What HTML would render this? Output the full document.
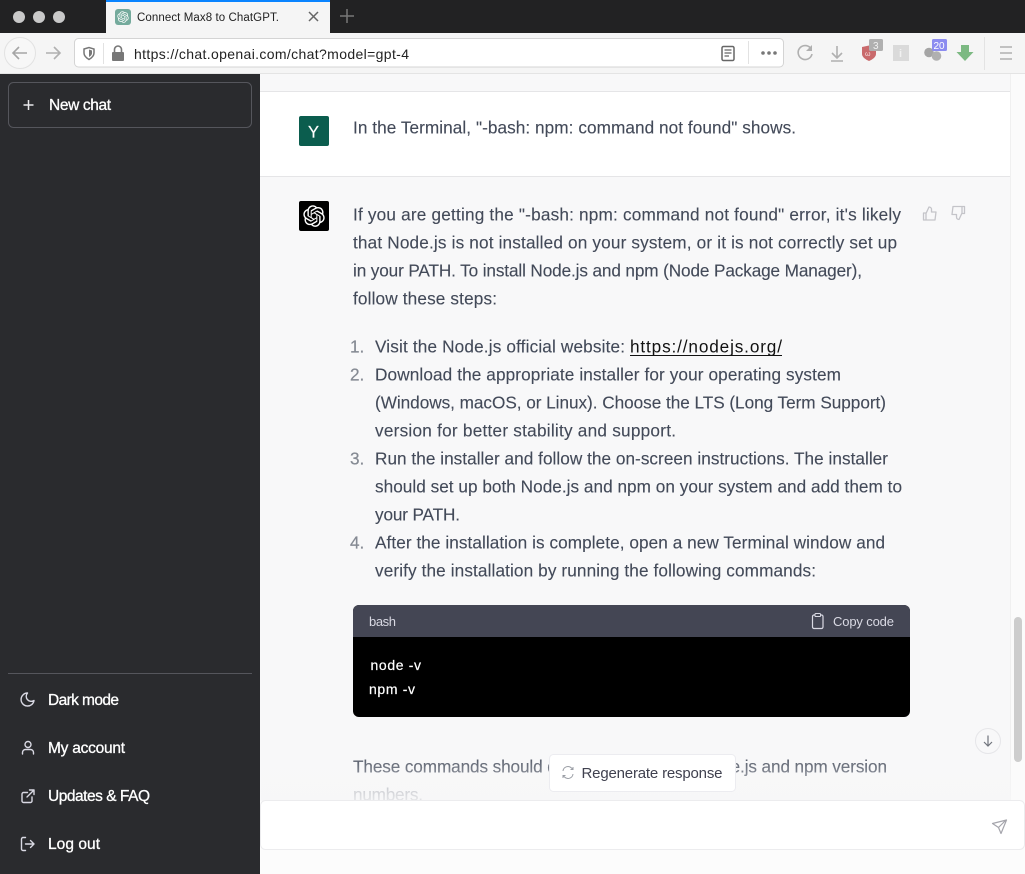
<!DOCTYPE html>
<html lang="en"><head><meta charset="utf-8"><title>Connect Max8 to ChatGPT.</title>
<style>
html,body{margin:0;padding:0;background:#f7f7f8;width:1025px;height:874px;overflow:hidden}
svg{display:block;position:absolute;left:0;top:0}
text{font-family:"Liberation Sans",sans-serif}
.t{font-size:17.2px;fill:#434a59;stroke:#434a59;stroke-width:.12px}
.s{font-size:15.500px;fill:#fff;stroke:#fff;stroke-width:.3px}
.n{font-size:17.200px;fill:#858a93;stroke:#858a93;stroke-width:.2px}
.i{fill:none;stroke:#d9d9e3;stroke-width:1.4;stroke-linecap:round;stroke-linejoin:round}
</style></head><body>
<svg width="1025" height="874" viewBox="0 0 1025 874" xmlns="http://www.w3.org/2000/svg">
<defs>
<path id="logo" d="M37.5324 16.8707C37.9808 15.5241 38.1363 14.0974 37.9886 12.6859C37.8409 11.2744 37.3934 9.91076 36.676 8.68622C35.6126 6.83404 33.9882 5.3676 32.0373 4.4985C30.0864 3.62941 27.9098 3.40259 25.8215 3.85078C24.8796 2.7893 23.7219 1.94125 22.4257 1.36341C21.1295 0.785575 19.7249 0.491269 18.3058 0.500197C16.1708 0.495044 14.0893 1.16803 12.3614 2.42214C10.6335 3.67624 9.34853 5.44666 8.6917 7.47815C7.30085 7.76286 5.98686 8.3414 4.8377 9.17505C3.68854 10.0087 2.73073 11.0782 2.02839 12.312C0.956464 14.1591 0.498905 16.2988 0.721698 18.4228C0.944492 20.5467 1.83612 22.5449 3.268 24.1293C2.81966 25.4759 2.66413 26.9026 2.81182 28.3141C2.95951 29.7256 3.40701 31.0892 4.12437 32.3138C5.18791 34.1659 6.8123 35.6322 8.76321 36.5013C10.7141 37.3704 12.8907 37.5973 14.9789 37.1492C15.9208 38.2107 17.0786 39.0587 18.3747 39.6366C19.6709 40.2144 21.0755 40.5087 22.4946 40.4998C24.6307 40.5054 26.7133 39.8321 28.4418 38.5772C30.1704 37.3223 31.4556 35.5506 32.1119 33.5179C33.5027 33.2332 34.8167 32.6547 35.9659 31.821C37.115 30.9874 38.0728 29.9178 38.7752 28.684C39.8458 26.8371 40.3023 24.6979 40.0789 22.5748C39.8556 20.4517 38.9639 18.4544 37.5324 16.8707ZM22.4978 37.8849C20.7443 37.8874 19.0459 37.2733 17.6994 36.1501C17.7601 36.117 17.8666 36.0586 17.936 36.0161L25.9004 31.4156C26.1003 31.3019 26.2663 31.137 26.3813 30.9378C26.4964 30.7386 26.5563 30.5124 26.5549 30.2825V19.0542L29.9213 20.998C29.9389 21.0068 29.9541 21.0198 29.9656 21.0359C29.977 21.052 29.9842 21.0707 29.9867 21.0902V30.3889C29.9842 32.375 29.1946 34.2791 27.7909 35.6841C26.3872 37.0892 24.4838 37.8806 22.4978 37.8849ZM6.39227 31.0064C5.51397 29.4888 5.19742 27.7107 5.49804 25.9832C5.55718 26.0187 5.66048 26.0818 5.73461 26.1244L13.699 30.7248C13.8975 30.8408 14.1233 30.902 14.3532 30.902C14.583 30.902 14.8088 30.8408 15.0073 30.7248L24.731 25.1103V28.9979C24.7321 29.0177 24.7283 29.0376 24.7199 29.0556C24.7115 29.0736 24.6988 29.0893 24.6829 29.1012L16.6317 33.7497C14.9096 34.7416 12.8643 35.0097 10.9447 34.4954C9.02506 33.9811 7.38785 32.7263 6.39227 31.0064ZM4.29707 13.6194C5.17156 12.0998 6.55279 10.9364 8.19885 10.3327C8.19885 10.4013 8.19491 10.5228 8.19491 10.6071V19.808C8.19351 20.0378 8.25334 20.2638 8.36823 20.4629C8.48312 20.6619 8.64893 20.8267 8.84863 20.9404L18.5723 26.5542L15.206 28.4979C15.1894 28.5089 15.1703 28.5155 15.1505 28.5173C15.1307 28.5191 15.1107 28.516 15.0924 28.5082L7.04046 23.8557C5.32135 22.8601 4.06716 21.2235 3.55289 19.3046C3.03862 17.3858 3.30624 15.3413 4.29707 13.6194ZM31.955 20.0556L22.2312 14.4411L25.5976 12.4981C25.6142 12.4872 25.6333 12.4805 25.6531 12.4787C25.6729 12.4769 25.6928 12.4801 25.7111 12.4879L33.7631 17.1364C34.9967 17.849 36.0017 18.8982 36.6606 20.1613C37.3194 21.4244 37.6047 22.849 37.4832 24.2684C37.3617 25.6878 36.8382 27.0432 35.9743 28.1759C35.1103 29.3086 33.9415 30.1717 32.6047 30.6641C32.6047 30.5947 32.6047 30.4733 32.6047 30.3889V21.188C32.6066 20.9586 32.5474 20.7328 32.4332 20.5338C32.319 20.3348 32.154 20.1698 31.955 20.0556ZM35.3055 15.0128C35.2464 14.9765 35.1431 14.9142 35.069 14.8717L27.1045 10.2712C26.906 10.1554 26.6803 10.0943 26.4504 10.0943C26.2206 10.0943 25.9948 10.1554 25.7963 10.2712L16.0726 15.8858V11.9982C16.0715 11.9783 16.0753 11.9585 16.0837 11.9405C16.0921 11.9225 16.1048 11.9068 16.1207 11.8949L24.1719 7.25025C25.4053 6.53903 26.8158 6.19376 28.2383 6.25482C29.6608 6.31589 31.0364 6.78077 32.2044 7.59508C33.3723 8.40939 34.2842 9.53945 34.8334 10.8531C35.3826 12.1667 35.5464 13.6095 35.3055 15.0128ZM14.2424 21.9419L10.8752 19.9981C10.8576 19.9893 10.8423 19.9763 10.8309 19.9602C10.8195 19.9441 10.8122 19.9254 10.8098 19.9058V10.6071C10.8107 9.18295 11.2173 7.78848 11.9819 6.58696C12.7466 5.38544 13.8377 4.42659 15.1275 3.82264C16.4173 3.21869 17.8524 2.99464 19.2649 3.1767C20.6775 3.35876 22.0089 3.93941 23.1034 4.85067C23.0427 4.88379 22.937 4.94215 22.8668 4.98473L14.9024 9.58517C14.7025 9.69878 14.5366 9.86356 14.4215 10.0626C14.3065 10.2616 14.2466 10.4877 14.2479 10.7175L14.2424 21.9419ZM16.071 17.9991L20.4018 15.4978L24.7325 17.9975V22.9985L20.4018 25.4983L16.071 22.9985V17.9991Z"/>
<linearGradient id="fade" x1="0" y1="0" x2="0" y2="1"><stop offset="0" stop-color="#f7f7f8" stop-opacity="0"/><stop offset="1" stop-color="#f7f7f8" stop-opacity=".85"/></linearGradient>
</defs>

<!-- Title bar -->
<rect width="1025" height="33" fill="#222223"/>
<circle cx="19" cy="17" r="6" fill="#c9c9c9"/><circle cx="39" cy="17" r="6" fill="#c9c9c9"/><circle cx="59" cy="17" r="6" fill="#c9c9c9"/>
<rect x="106" y="0" width="224" height="33" fill="#f5f5f5"/>
<rect x="106" y="0" width="224" height="2" fill="#0a84ff"/>
<rect x="115" y="9" width="16" height="16" rx="3" fill="#74aa9c"/>
<use href="#logo" transform="translate(117.2 11.2) scale(.285)" fill="#fff"/>
<text x="137" y="21" font-size="11.5" fill="#222" textLength="142" lengthAdjust="spacing">Connect Max8 to ChatGPT.</text>
<path d="M309 12l9 9M318 12l-9 9" stroke="#666" stroke-width="1.5" fill="none"/>
<path d="M347 9v14M340 16h14" stroke="#777" stroke-width="1.5" fill="none"/>

<!-- Toolbar -->
<rect y="33" width="1025" height="41" fill="#f5f5f5"/>
<rect y="73" width="1025" height="1" fill="#e4e4e4"/>
<circle cx="20" cy="53" r="15.5" fill="#f7f7f7" stroke="#e2e2e2"/>
<path d="M27 53H13M19 47l-6 6 6 6" fill="none" stroke="#a5a5a5" stroke-width="1.6"/>
<path d="M46 53h14M54 47l6 6-6 6" fill="none" stroke="#b0b0b0" stroke-width="1.6"/>
<rect x="74.500" y="38.500" width="709" height="28.500" rx="4" fill="#fff" stroke="#d4d4d4"/>
<path d="M84 49l5-1.500 5 1.500v4c0 3-2.500 5-5 6.500-2.500-1.500-5-3.500-5-6.500z" fill="none" stroke="#777" stroke-width="1.500"/>
<path d="M89 49.500l3 1v2.500c0 2-1.500 3-3 4z" fill="#777"/>
<rect x="103" y="43" width="1" height="21" fill="#e2e2e2"/>
<rect x="112" y="52" width="12" height="9" rx="1" fill="#777"/>
<path d="M114.500 52v-2.500a3.500 3.500 0 017 0V52" fill="none" stroke="#777" stroke-width="1.600"/>
<text x="134" y="59" font-size="14" fill="#222" textLength="275" lengthAdjust="spacing">https://chat.openai.com/chat?model=gpt-4</text>
<rect x="722" y="46.500" width="12" height="14" rx="1.500" fill="none" stroke="#666" stroke-width="1.500"/>
<path d="M724.500 50h7M724.500 53h7M724.500 56h4.500" stroke="#666" stroke-width="1.200"/>
<rect x="748" y="41" width="1" height="23" fill="#e2e2e2"/>
<circle cx="763" cy="53" r="1.800" fill="#777"/><circle cx="769" cy="53" r="1.800" fill="#777"/><circle cx="775" cy="53" r="1.800" fill="#777"/>
<path d="M810.500 48a7 7 0 10 1.500 6" fill="none" stroke="#b0b0b0" stroke-width="1.600"/>
<path d="M812 45v6h-6" fill="#b0b0b0" stroke="none"/>
<path d="M837 46v12M832 53l5 5 5-5M831 61h12" fill="none" stroke="#b0b0b0" stroke-width="1.600"/>
<path d="M862 47l7-1.500 7 1.500v7c0 3-3.500 5.500-7 7-3.500-1.500-7-4-7-7z" fill="#c96a6c"/>
<text x="865" y="56" font-size="7" fill="#f3dede">ω</text>
<rect x="869" y="39" width="14" height="12" rx="1.500" fill="#b0b0b0"/>
<text x="873" y="49" font-size="10" fill="#f2f2f2">3</text>
<rect x="893" y="45" width="16" height="16" fill="#dadada"/>
<text x="899" y="57" font-size="11" font-weight="bold" fill="#f1f1f1">i</text>
<circle cx="929" cy="52.500" r="4.800" fill="#a5a5a5"/><circle cx="936.500" cy="56" r="4.800" fill="#b0b0b0"/>
<rect x="932" y="39" width="15" height="12" rx="1.500" fill="#8c8cf0"/>
<text x="933.500" y="49" font-size="10" fill="#fff">20</text>
<path d="M961 45h8v7h4.500l-8.500 9-8.500-9h4.500z" fill="#7cb982"/>
<rect x="984" y="37" width="1" height="33" fill="#e3e3e3"/>
<path d="M1000 47h12M1000 53h12M1000 59h12" stroke="#b0b0b0" stroke-width="1.600"/>

<!-- Main -->
<rect x="260" y="74" width="765" height="800" fill="#f8f8f9"/>
<rect x="260" y="92" width="751" height="84" fill="#fff"/>
<rect x="260" y="91" width="751" height="1" fill="#e5e5e7"/>
<rect x="260" y="176" width="751" height="1" fill="#e5e5e7"/>
<rect x="1011" y="74" width="14" height="727" fill="#fbfbfb"/>
<rect x="1010" y="74" width="1" height="727" fill="#f0f0f0"/>
<rect x="1014" y="617" width="8" height="145" rx="4" fill="#cdcdcd"/>

<rect x="299" y="116" width="30" height="30" rx="2" fill="#0b5d4e"/>
<text x="308" y="137.500" font-size="16.500" fill="#fff" stroke="#fff" stroke-width=".2">Y</text>
<text class="t" x="353" y="133.500" textLength="443" lengthAdjust="spacing">In the Terminal, "-bash: npm: command not found" shows.</text>

<rect x="299" y="201" width="30" height="30" rx="2" fill="#000"/>
<use href="#logo" transform="translate(303 205) scale(.54)" fill="#fff"/>

<g fill="none" stroke="#c4c4c9" stroke-width="1.300" stroke-linejoin="round">
<path d="M926 213v7h-2.500v-7zM926 213.500l3-6.500c1.500 0 2.500 1 2.500 2.500v2.500h4.500l-1 8h-9"/>
<path d="M962 213.500v-7h2.500v7zM962 213l-3 6.500c-1.500 0-2.500-1-2.500-2.500v-2.500H952l1-8h9"/>
</g>

<text class="t" x="353" y="220.500" textLength="548" lengthAdjust="spacing">If you are getting the "-bash: npm: command not found" error, it's likely</text>
<text class="t" x="353" y="248.500" textLength="544" lengthAdjust="spacing">that Node.js is not installed on your system, or it is not correctly set up</text>
<text class="t" x="353" y="276.500" textLength="509" lengthAdjust="spacing">in your PATH. To install Node.js and npm (Node Package Manager),</text>
<text class="t" x="353" y="304.500" textLength="144" lengthAdjust="spacing">follow these steps:</text>

<text class="n" x="350" y="352.500">1.</text>
<text class="t" x="375" y="352.500" textLength="250" lengthAdjust="spacing">Visit the Node.js official website:</text>
<text x="630" y="352.500" font-size="17.200" fill="#111" textLength="152" lengthAdjust="spacing">https://nodejs.org/</text>
<rect x="630" y="355" width="152" height="1" fill="#111"/>
<text class="n" x="350" y="380.500">2.</text>
<text class="t" x="375" y="380.500" textLength="466" lengthAdjust="spacing">Download the appropriate installer for your operating system</text>
<text class="t" x="375" y="408.500" textLength="511" lengthAdjust="spacing">(Windows, macOS, or Linux). Choose the LTS (Long Term Support)</text>
<text class="t" x="375" y="436.500" textLength="301" lengthAdjust="spacing">version for better stability and support.</text>
<text class="n" x="350" y="464.500">3.</text>
<text class="t" x="375" y="464.500" textLength="513" lengthAdjust="spacing">Run the installer and follow the on-screen instructions. The installer</text>
<text class="t" x="375" y="492.500" textLength="527" lengthAdjust="spacing">should set up both Node.js and npm on your system and add them to</text>
<text class="t" x="375" y="520.500" textLength="85" lengthAdjust="spacing">your PATH.</text>
<text class="n" x="350" y="548.500">4.</text>
<text class="t" x="375" y="548.500" textLength="510" lengthAdjust="spacing">After the installation is complete, open a new Terminal window and</text>
<text class="t" x="375" y="576.500" textLength="441" lengthAdjust="spacing">verify the installation by running the following commands:</text>

<!-- Code block -->
<rect x="353" y="605" width="557" height="112" rx="6" fill="#000"/>
<path d="M353 637v-26a6 6 0 016-6h545a6 6 0 016 6v26z" fill="#444654"/>
<text x="369" y="626" font-size="13" fill="#d9d9e3" textLength="27" lengthAdjust="spacing">bash</text>
<rect x="812.500" y="615" width="10.500" height="13.500" rx="1.500" fill="none" stroke="#d9d9e3" stroke-width="1.200"/>
<rect x="815" y="613.500" width="5.500" height="3" rx=".8" fill="#444654" stroke="#d9d9e3" stroke-width="1"/>
<text x="833" y="626" font-size="13" fill="#d9d9e3" textLength="61" lengthAdjust="spacing">Copy code</text>
<text x="370.500" y="670" font-size="14" fill="#fff" stroke="#fff" stroke-width=".2" textLength="50.500" lengthAdjust="spacing">node -v</text>
<text x="369" y="694" font-size="14" fill="#fff" stroke="#fff" stroke-width=".2" textLength="46" lengthAdjust="spacing">npm -v</text>

<text class="t" x="353" y="772.500" textLength="534" lengthAdjust="spacing">These commands should display the installed Node.js and npm version</text>
<text class="t" x="353" y="800.500" textLength="70" lengthAdjust="spacing" opacity=".6">numbers.</text>
<rect x="261" y="752" width="750" height="50" fill="url(#fade)"/>

<circle cx="988" cy="741" r="12.500" fill="#f8f8f9" stroke="#e6e6e9"/>
<path d="M988 735.500v10.500M984 742l4 4 4-4" fill="none" stroke="#70747c" stroke-width="1.200"/>

<rect x="549.500" y="754.500" width="186" height="37" rx="4" fill="#fff" stroke="#ececf0"/>
<g fill="none" stroke="#9a9ea5" stroke-width="1">
<path d="M563 771a5 5 0 018.500-3l1.500 1.500M573 774a5 5 0 01-8.500 3L563 775.500"/>
<path d="M573 767v2.500h-2.500M563 778v-2.500h2.500"/>
</g>
<text x="581.500" y="778" font-size="15" fill="#40414f" textLength="141" lengthAdjust="spacing">Regenerate response</text>

<!-- Input -->
<rect x="260" y="801" width="765" height="73" fill="#fcfcfc"/>
<rect x="260.500" y="800.500" width="764" height="49" rx="5" fill="#fff" stroke="#ececee"/>
<path d="M992.500 823.500l14-3.500-5.500 13.500-2.500-6zM998.500 827.500l7.500-7.500" fill="none" stroke="#a5a5ac" stroke-width="1.200" stroke-linejoin="round"/>

<!-- Sidebar -->
<rect x="0" y="74" width="260" height="800" fill="#2a2b2e"/>
<rect x="8.500" y="82.500" width="243" height="45" rx="5" fill="none" stroke="#55565c"/>
<path d="M28.500 100v10M23.500 105h10" stroke="#e8e8ea" stroke-width="1.500" fill="none"/>
<text class="s" x="49" y="110" textLength="62" lengthAdjust="spacing">New chat</text>
<rect x="8" y="673" width="244" height="1" fill="#55565c"/>

<path class="i" d="M34 700.500a6.500 6.500 0 11-6.500-7.500 5 5 0 006.500 7.500z"/>
<text class="s" x="48" y="705" textLength="71" lengthAdjust="spacing">Dark mode</text>

<circle class="i" cx="28" cy="744.500" r="3"/>
<path class="i" d="M22.500 754v-1.500a3 3 0 013-3h5a3 3 0 013 3v1.500"/>
<text class="s" x="48" y="753" textLength="77" lengthAdjust="spacing">My account</text>

<path class="i" d="M32 797v4a1.500 1.500 0 01-1.500 1.500h-7A1.500 1.500 0 0122 801v-7a1.500 1.500 0 011.500-1.500h4M29.500 790H34v4.500M27 797l7-7"/>
<text class="s" x="48" y="801" textLength="102" lengthAdjust="spacing">Updates &amp; FAQ</text>

<path class="i" d="M25.500 850.500h-2.500a1.500 1.500 0 01-1.500-1.500v-10a1.500 1.500 0 011.500-1.500h2.500M30.500 840.500l3.500 3.500-3.500 3.500M34 844h-8.500"/>
<text class="s" x="48" y="849" textLength="52" lengthAdjust="spacing">Log out</text>
</svg>
</body></html>
